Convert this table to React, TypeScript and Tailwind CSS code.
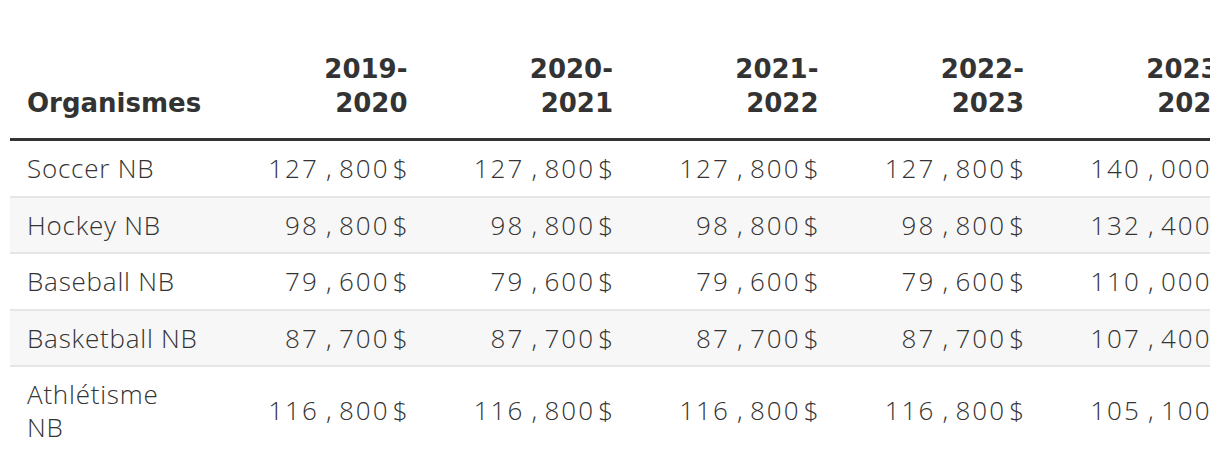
const years = ['2019-2020', '2020-2021', '2021-2022', '2022-2023', '2023-2024', '2024-2025']

const rows = [
  { name: 'Soccer NB', values: ['127,800', '127,800', '127,800', '127,800', '140,000', '140,000'] },
  { name: 'Hockey NB', values: ['98,800', '98,800', '98,800', '98,800', '132,400', '132,400'] },
  { name: 'Baseball NB', values: ['79,600', '79,600', '79,600', '79,600', '110,000', '110,000'] },
  { name: 'Basketball NB', values: ['87,700', '87,700', '87,700', '87,700', '107,400', '107,400'] },
  { name: 'Athlétisme NB', values: ['116,800', '116,800', '116,800', '116,800', '105,100', '105,100'] },
]

// the comma sits in its own wide slot, like the source font does
function Amount({ value }: { value: string }) {
  const [thousands, rest] = value.split(',')
  return (
    <span className="whitespace-nowrap">
      <span className="tracking-[0.08em]">{thousands}</span>
      <span className="inline-block w-[20px] text-center">,</span>
      <span className="tracking-[0.08em]">{rest}</span>
      <span className="ml-[3px]">$</span>
    </span>
  )
}

export default function App() {
  return (
    <div className="bg-white min-h-[464px] pt-[40px] px-[10px] font-['Open_Sans',sans-serif] text-[#333]">
      <div className="overflow-hidden w-[1200px]">
        <table className="border-collapse table-fixed w-[1440px]">
          <colgroup>
            <col className="w-[208px]" />
            {years.map((y) => (
              <col key={y} className="w-[205.5px]" />
            ))}
          </colgroup>
          <thead>
            <tr className="border-b-[3px] border-[#333]">
              <th className="text-left align-bottom font-['DejaVu_Sans',sans-serif] font-bold text-[26px] leading-[34px] pl-[17px] pr-4 pt-3 pb-[18px]">
                Organismes
              </th>
              {years.map((y) => {
                const [a, b] = y.split('-')
                return (
                  <th
                    key={y}
                    className="text-right align-bottom font-['DejaVu_Sans',sans-serif] font-bold text-[26px] leading-[34px] pr-4 pl-4 pt-3 pb-[18px]"
                  >
                    {a}-
                    <br />
                    {b}
                  </th>
                )
              })}
            </tr>
          </thead>
          <tbody>
            {rows.map((row, i) => (
              <tr
                key={row.name}
                className={`${i % 2 === 1 ? 'bg-[#f7f7f7]' : 'bg-white'} ${
                  i < rows.length - 1 ? 'border-b-2 border-[#e6e6e6]' : ''
                }`}
              >
                <td className="text-left align-middle font-light text-[26px] leading-[32.5px] tracking-[0.03em] pl-[17px] pr-4 py-[11px]">
                  <div className="max-w-[173px]">{row.name}</div>
                </td>
                {row.values.map((v, j) => (
                  <td
                    key={j}
                    className="text-right align-middle font-light text-[26px] leading-[32.5px] pr-4 pl-4 py-[11px]"
                  >
                    <Amount value={v} />
                  </td>
                ))}
              </tr>
            ))}
          </tbody>
        </table>
      </div>
    </div>
  )
}
